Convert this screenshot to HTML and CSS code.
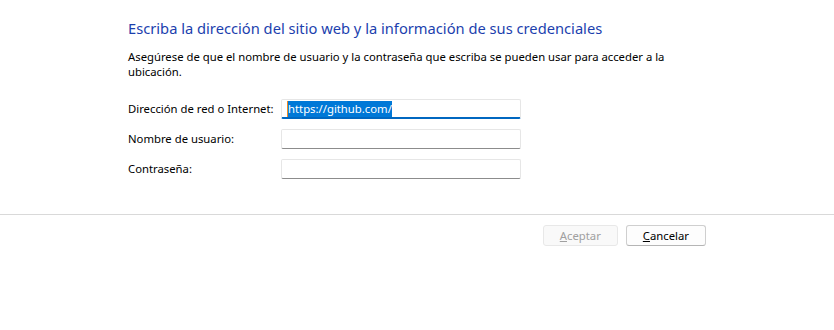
FILE: index.html
```html
<!DOCTYPE html>
<html lang="es">
  <head>
    <meta charset="UTF-8" />
    <title>Agregar credencial</title>
    <link rel="stylesheet" href="styles.css">
  </head>
  <body>
    <div class="page">
      <h1 class="title">Escriba la dirección del sitio web y la información de sus credenciales</h1>
      <p class="hint">Asegúrese de que el nombre de usuario y la contraseña que escriba se pueden usar para acceder a la ubicación.</p>

      <form class="fields" id="credForm">
        <label for="address">Dirección de red o Internet:</label>
        <div class="box focused"><span class="selected">https://github.com/</span></div>

        <label for="user">Nombre de usuario:</label>
        <input type="text" id="user" name="user" class="box" />

        <label for="pass">Contraseña:</label>
        <input type="password" id="pass" name="pass" class="box" />
      </form>
    </div>

    <div class="footer">
      <button class="btn" disabled><u>A</u>ceptar</button>
      <button class="btn"><u>C</u>ancelar</button>
    </div>
  </body>
</html>
```

FILE: styles.css
```css
body {
  margin: 0;
  background-color: #ffffff;
  font-family: "Noto Sans", "Open Sans", sans-serif;
  font-size: 11.3px;
  color: #000000;
}

.page {
  padding: 17px 0 0 128px;
}

.title {
  margin: 0;
  font-size: 14.7px;
  font-weight: normal;
  color: #1c3fae;
  line-height: 22px;
}

.hint {
  margin: 10px 0 0 0;
  width: 545px;
  line-height: 15px;
}

.fields {
  display: grid;
  grid-template-columns: 153px 240px;
  row-gap: 10px;
  align-items: center;
  margin-top: 20px;
}

label {
  white-space: nowrap;
  line-height: 20px;
}

.box {
  box-sizing: border-box;
  height: 20px;
  width: 240px;
  margin: 0;
  padding: 0 5px;
  border: 1px solid #e6e6e6;
  border-bottom: 1px solid #8c8c8c;
  border-radius: 2px;
  background: #ffffff;
  font: inherit;
  outline: none;
}

.focused {
  border-bottom: 2px solid #0067c0;
  display: flex;
  align-items: center;
}

.selected {
  background-color: #0078d7;
  color: #ffffff;
  border-left: 1px solid #f08a24;
  line-height: 16px;
}

.footer {
  margin-top: 35px;
  border-top: 1px solid #d9d9d9;
  display: flex;
  justify-content: flex-end;
  gap: 8px;
  padding: 10px 128px 0 0;
}

.btn {
  box-sizing: border-box;
  height: 21px;
  min-width: 75px;
  padding: 0 16px;
  border: 1px solid #cfcfcf;
  border-bottom-color: #b5b5b5;
  border-radius: 3px;
  background-color: #fdfdfd;
  font: inherit;
  color: #000000;
  line-height: 18px;
}

.btn:disabled {
  border-color: #e8e8e8;
  background-color: #f9f9f9;
  color: #a0a0a0;
}
```
